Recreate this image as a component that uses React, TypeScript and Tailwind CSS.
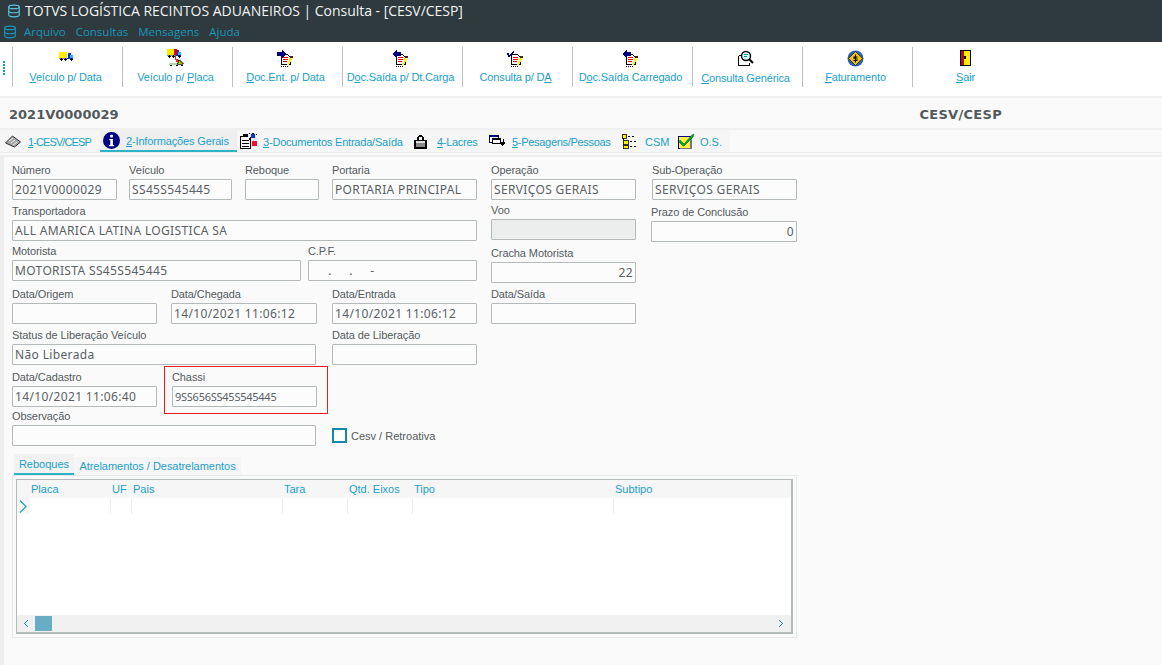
import React from "react";
import { Database } from "lucide-react";

const UI = "font-['Liberation_Sans',Arial,sans-serif]";

function Svg({ w = 20, h = 20, children }: { w?: number; h?: number; children: React.ReactNode }) {
  return (
    <svg width={w} height={h} viewBox={`0 0 ${w} ${h}`} shapeRendering="crispEdges" className="block">
      {children}
    </svg>
  );
}

function Truck() {
  return (
    <g>
      <rect x="0" y="0" width="8" height="6" fill="#ffee00" />
      <rect x="9" y="1" width="3" height="5" fill="#0033dd" />
      <rect x="11" y="3" width="3" height="3" fill="#33aaff" />
      <rect x="8" y="6" width="6" height="1" fill="#0033aa" />
      <rect x="0" y="6" width="8" height="1" fill="#888" />
      <path d="M2 6h1v1h1v1h-1v1h-1v-1h-1v-1h1zM6 6h1v1h1v1h-1v1h-1v-1h-1v-1h1zM12 6h1v1h1v1h-1v1h-1v-1h-1v-1h1z" fill="#000" />
    </g>
  );
}

function TruckIcon() {
  return (
    <Svg w={14} h={10}>
      <Truck />
    </Svg>
  );
}

function TruckPlaca() {
  return (
    <Svg w={18} h={20}>
      <Truck />
      <rect x="7" y="0" width="3" height="6" fill="#ee0000" />
      <path d="M8 6h1v4h2v1h1v1h-1v2h-1v-1h-1v-2h-1z" fill="#ee2233" />
      <rect x="2" y="14" width="13" height="2" fill="#b9d0b4" />
      <path d="M11 11h2l3 4h-6z" fill="#aacc00" />
      <path d="M11 11h2v1h1v1h1v1h1v1h-6v-1h1z" fill="none" stroke="#000" strokeWidth="0.6" />
      <path d="M3 16h2v1h-2zM9 16h2v1h-2zM14 16h2v1h-2z" fill="#000" />
    </Svg>
  );
}

function Paper() {
  return (
    <g>
      <path d="M4.5 4.5h6l3 3v7h-9z" fill="#fff" stroke="#000" strokeWidth="1" />
      <rect x="6" y="7" width="5" height="1" fill="#ee0000" />
      <rect x="6" y="9" width="5" height="1" fill="#ee0000" />
      <rect x="6" y="11" width="4" height="1" fill="#ee0000" />
      <path d="M12 8h2v1h1v1h-1v2h-1v2h-1v1h-2v-1h1v-2h1z" fill="#ffee00" />
      <rect x="13" y="6" width="3" height="2" fill="#552200" />
      <path d="M4 16h1v1h-1zM6 16h1v1h-1zM8 16h1v1h-1zM10 16h1v1h-1z" fill="#000" />
    </g>
  );
}

function DocArrow({ dir }: { dir: "in" | "out" }) {
  return (
    <Svg w={17} h={17}>
      <Paper />
      {dir === "in" ? (
        <path d="M0 2h5v-2h1l3 4-3 4h-1v-2h-5z" fill="#000080" />
      ) : (
        <path d="M9 2h-4v-2h-1l-4 4 4 4h1v-2h4z" fill="#000080" />
      )}
    </Svg>
  );
}

function DocCheck() {
  return (
    <Svg w={17} h={17}>
      <Paper />
      <path d="M0 3h2v2h1v-1h1v-1h1v-1h1v-1h1v2h-1v1h-1v1h-1v1h-1v1h-2v-2h-1z" fill="#000080" />
    </Svg>
  );
}

function Magnifier() {
  return (
    <Svg w={17} h={17}>
      <path d="M1.5 5.5h4M1.5 5.5v10h11v-3" fill="none" stroke="#000" strokeWidth="1" />
      <circle cx="9" cy="6" r="4.5" fill="#dff3f2" stroke="#000" strokeWidth="1.4" shapeRendering="auto" />
      <rect x="7" y="4" width="4" height="1" fill="#009999" />
      <rect x="7" y="6" width="3" height="1" fill="#009999" />
      <path d="M12 9l4 4" stroke="#000" strokeWidth="2" shapeRendering="auto" />
    </Svg>
  );
}

function Billing() {
  return (
    <svg width="17" height="17" viewBox="0 0 17 17" className="block">
      <circle cx="8.5" cy="8.5" r="8" fill="#2a5fc0" />
      <path d="M8.5 1.5l7 7-7 7-7-7z" fill="#f5c400" stroke="#000" strokeWidth="0.6" />
      <rect x="8" y="4.5" width="1" height="8" fill="#000" />
      <path d="M6.5 6.5h4v1h-3v1h3v2.5h-4v-1h3v-1h-3z" fill="#000" />
    </svg>
  );
}

function ExitDoor() {
  return (
    <Svg w={12} h={17}>
      <rect x="0" y="0" width="11" height="16" fill="#000" />
      <rect x="1" y="1" width="3" height="14" fill="#aa1122" />
      <rect x="4" y="1" width="6" height="14" fill="#ffee00" />
      <rect x="4" y="6" width="2" height="3" fill="#000" />
    </Svg>
  );
}

function PrinterIcon() {
  return (
    <svg width="16" height="13" viewBox="0 0 16 13" className="block">
      <path d="M0.5 8l7-7 8 6-6 5z" fill="#a7a7a7" stroke="#333" strokeWidth="1" />
      <path d="M4 6l4-3M6 8l4-3M8 10l4-3" stroke="#eee" strokeWidth="1" />
    </svg>
  );
}

function InfoIcon() {
  return (
    <svg width="17" height="17" viewBox="0 0 17 17" className="block">
      <circle cx="8.5" cy="8.5" r="8.5" fill="#000080" />
      <rect x="7.2" y="2.8" width="2.7" height="2.6" fill="#fff" />
      <path d="M6.3 7h3.6v6h1v1.2h-4.6v-1.2h1v-4.8h-1z" fill="#fff" />
    </svg>
  );
}

function DocsIcon() {
  return (
    <Svg w={17} h={16}>
      <rect x="0.5" y="3.5" width="10" height="12" fill="#fff" stroke="#000" />
      <rect x="3" y="1" width="5" height="3" fill="#000" />
      <path d="M2 7h7v1h-7zM2 10h7v1h-7zM2 13h7v1h-7z" fill="#000" />
      <path d="M8 0h8v5h1v8h-1v1h-5v-10h-3z" fill="#e8e8e8" />
      <path d="M9 0h1v1h-1zM12 0h2v1h-2zM16 1h1v1h-1zM16 11h1v2h-1z" fill="#000" />
      <rect x="11" y="1" width="4" height="4" fill="#1133cc" />
      <rect x="12" y="8" width="5" height="5" fill="#ee1133" />
      <rect x="9" y="5" width="2" height="2" fill="#000" />
    </Svg>
  );
}

function LockIcon() {
  return (
    <Svg w={13} h={15}>
      <path d="M3 6v-3h1v-1h1v-1h3v1h1v1h1v3h-2v-3h-3v3z" fill="#000" />
      <rect x="0" y="6" width="13" height="9" fill="#000" />
      <rect x="2" y="7" width="9" height="2" fill="#ddd" />
      <rect x="2" y="9" width="9" height="4" fill="#8a8a8a" />
    </Svg>
  );
}

function WindowsIcon() {
  return (
    <Svg w={16} h={12}>
      <rect x="0" y="0" width="10" height="8" fill="#000080" />
      <rect x="1" y="2" width="8" height="5" fill="#fff" />
      <rect x="3" y="3" width="9" height="6" fill="#000" />
      <rect x="4" y="5" width="7" height="3" fill="#fff" />
      <path d="M14 4h1v3h1v2h-1v1h-1v1h-1v-1h-1v-1h-1v-2h3z" fill="#000" />
    </Svg>
  );
}

function TreeIcon() {
  return (
    <Svg w={15} h={15}>
      <rect x="1" y="2" width="1" height="13" fill="#000" />
      <rect x="0" y="0" width="4" height="4" fill="#ffee00" stroke="#000" strokeWidth="0.8" />
      <rect x="1" y="6" width="5" height="4" fill="#ffee00" stroke="#000" strokeWidth="0.8" />
      <rect x="1" y="11" width="5" height="3" fill="#ffee00" stroke="#000" strokeWidth="0.8" />
      <path d="M6 2h2v1h-2zM10 2h2v1h-2zM8 7h2v1h-2zM12 7h2v1h-2zM8 12h2v1h-2zM12 12h2v1h-2z" fill="#000" />
    </Svg>
  );
}

function CheckIcon() {
  return (
    <Svg w={17} h={16}>
      <rect x="1" y="3" width="12" height="12" fill="#ffee44" stroke="#000080" strokeWidth="1" />
      <rect x="3" y="15" width="12" height="1" fill="#777" />
      <rect x="13" y="5" width="2" height="10" fill="#777" />
      <path d="M3 7l3 3 1 1 8-9 2-1-1 3-9 9-1 0-4-4z" fill="#00aa22" stroke="#005511" strokeWidth="0.5" shapeRendering="auto" />
    </Svg>
  );
}

const tools: { w: string; top: string; icon: React.ReactNode; label: React.ReactNode; low?: boolean }[] = [
  { w: "w-[110px]", top: "pt-[5px]", icon: <TruckIcon />, label: <><u>V</u>eículo p/ Data</> },
  { w: "w-[110px]", top: "pt-[2px]", icon: <TruckPlaca />, label: <>Veículo p/ <u>P</u>laca</> },
  { w: "w-[110px]", top: "pt-[3px]", icon: <DocArrow dir="in" />, label: <><u>D</u>oc.Ent. p/ Data</> },
  { w: "w-[120px]", top: "pt-[3px]", icon: <DocArrow dir="out" />, label: <>D<u>o</u>c.Saída p/ Dt.Carga</> },
  { w: "w-[110px]", top: "pt-[3px]", icon: <DocCheck />, label: <>Consulta p/ D<u>A</u></> },
  { w: "w-[120px]", top: "pt-[3px]", icon: <DocArrow dir="out" />, label: <>D<u>o</u>c.Saída Carregado</> },
  { w: "w-[110px]", top: "pt-[3px]", icon: <Magnifier />, label: <><u>C</u>onsulta Genérica</>, low: true },
  { w: "w-[110px]", top: "pt-[3px]", icon: <Billing />, label: <><u>F</u>aturamento</> },
  { w: "w-[110px]", top: "pt-[3px]", icon: <ExitDoor />, label: <><u>S</u>air</> },
];

function Toolbar() {
  return (
    <div className="flex h-[56px] shrink-0 items-start border-b-2 border-[#f0f0f0] bg-white pt-[5px]">
      <div className="flex h-[40px] w-[12px] shrink-0 items-center">
        <div className="ml-[3px] mt-[2px] h-[15px] w-[2px] bg-[repeating-linear-gradient(to_bottom,#1a9bc4_0,#1a9bc4_2px,transparent_2px,transparent_3px)]" />
      </div>
      {tools.map((t, i) => (
        <div key={i} className={`flex h-[40px] shrink-0 flex-col items-center border-l border-[#b9c1c1] pr-[4px] ${t.w} ${t.top}`}>
          <div className="flex h-[20px] items-start justify-center">{t.icon}</div>
          <div className={`mt-auto whitespace-nowrap text-[11px] leading-[14px] tracking-[-0.15px] text-[#1c9fc9] ${UI} ${t.low ? "pb-[2px]" : "pb-[3px]"}`}>{t.label}</div>
        </div>
      ))}
    </div>
  );
}

const tabs: { cls: string; text?: string; icon: React.ReactNode; label: React.ReactNode; active?: boolean }[] = [
  { cls: "w-[100px] pl-[5px]", text: "tracking-[-0.9px]", icon: <PrinterIcon />, label: <><u>1</u>-CESV/CESP</> },
  { cls: "w-[137px] pl-[3px]", text: "tracking-[-0.15px]", icon: <InfoIcon />, label: <><u>2</u>-Informações Gerais</>, active: true },
  { cls: "w-[173px] pl-[3px]", text: "tracking-[-0.2px]", icon: <DocsIcon />, label: <><u>3</u>-Documentos Entrada/Saída</> },
  { cls: "w-[74px] pl-[4px]", text: "tracking-[-0.3px]", icon: <LockIcon />, label: <><u>4</u>-Lacres</> },
  { cls: "w-[132px] pl-[5px]", text: "tracking-[-0.3px]", icon: <WindowsIcon />, label: <><u>5</u>-Pesagens/Pessoas</> },
  { cls: "w-[55px] pl-[6px]", icon: <TreeIcon />, label: <>CSM</> },
  { cls: "w-[59px] pl-[6px]", icon: <CheckIcon />, label: <>O.S.</> },
];

function Tabs() {
  return (
    <div className="flex h-[23px] shrink-0 border-b border-[#ececec] bg-[#fafafa]">
      {tabs.map((t, i) => (
        <div
          key={i}
          className={`flex shrink-0 items-center ${t.cls} ${t.active ? "border-b-2 border-[#2bb3c6] bg-[#efefef]" : "bg-[#f6f6f6]"}`}
        >
          <div className="w-[23px] shrink-0">{t.icon}</div>
          <span className={`whitespace-nowrap pt-[2px] text-[11px] leading-[14px] text-[#1c9fc9] ${UI} ${t.text ?? ""}`}>{t.label}</span>
        </div>
      ))}
    </div>
  );
}

function Field({
  label,
  value = "",
  w,
  right = false,
  disabled = false,
  small = false,
}: {
  label: string;
  value?: string;
  w: string;
  right?: boolean;
  disabled?: boolean;
  small?: boolean;
}) {
  return (
    <div className={`shrink-0 ${w}`}>
      <div className={`h-[16px] whitespace-nowrap text-[11px] leading-[14px] tracking-[-0.1px] text-[#555b5e] ${UI}`}>{label}</div>
      <div
        className={`flex h-[21px] items-center whitespace-pre rounded-[1px] border border-[#b4baba] px-[2px] leading-none text-[#5a6064] font-['Noto_Sans',sans-serif] ${
          disabled ? "bg-[#eceeee]" : "bg-[#fcfcfc]"
        } ${right ? "justify-end" : ""} ${small ? "text-[11px] tracking-[-0.25px]" : "text-[12px] tracking-[0.35px]"}`}
      >
        {value}
      </div>
    </div>
  );
}

function Form() {
  return (
    <div className="flex pl-[8px] pt-[6px]">
      <div className="flex w-[465px] shrink-0 flex-col">
        <div className="flex">
          <Field label="Número" value="2021V0000029" w="w-[105px]" />
          <Field label="Veículo" value="SS45S545445" w="w-[103px] ml-[12px]" />
          <Field label="Reboque" w="w-[74px] ml-[13px]" />
          <Field label="Portaria" value="PORTARIA PRINCIPAL" w="w-[145px] ml-[13px]" />
        </div>
        <div className="mt-[4px] flex">
          <Field label="Transportadora" value="ALL AMARICA LATINA LOGISTICA SA" w="w-[465px]" />
        </div>
        <div className="mt-[3px] flex">
          <Field label="Motorista" value="MOTORISTA SS45S545445" w="w-[289px]" />
          <Field label="C.P.F." value="     .     .     -" w="w-[169px] ml-[7px]" />
        </div>
        <div className="mt-[6px] flex">
          <Field label="Data/Origem" w="w-[145px]" />
          <Field label="Data/Chegada" value="14/10/2021 11:06:12" w="w-[146px] ml-[14px]" />
          <Field label="Data/Entrada" value="14/10/2021 11:06:12" w="w-[145px] ml-[15px]" />
        </div>
        <div className="mt-[4px] flex">
          <Field label="Status de Liberação Veículo" value="Não Liberada" w="w-[304px]" />
          <Field label="Data de Liberação" w="w-[145px] ml-[16px]" />
        </div>
        <div className="mt-[5px] flex">
          <Field label="Data/Cadastro" value="14/10/2021 11:06:40" w="w-[145px]" />
          <div className="relative ml-[15px]">
            <Field label="Chassi" value="9SS656SS45S545445" small w="w-[145px]" />
            <div className="absolute -bottom-[7px] -left-[8px] -right-[11px] -top-[4px] border border-[#ee1c25]" />
          </div>
        </div>
        <div className="mt-[2px] flex items-end">
          <Field label="Observação" w="w-[304px]" />
          <div className="mb-[3px] ml-[16px] flex items-center gap-[4px]">
            <div className="h-[15px] w-[15px] border-2 border-[#1489ad] bg-white" />
            <span className={`text-[11px] leading-[14px] text-[#555b5e] ${UI}`}>Cesv / Retroativa</span>
          </div>
        </div>
      </div>
      <div className="ml-[14px] flex w-[145px] shrink-0 flex-col">
        <Field label="Operação" value="SERVIÇOS GERAIS" w="w-[145px]" />
        <div className="mt-[3px]">
          <Field label="Voo" disabled w="w-[145px]" />
        </div>
        <div className="mt-[6px]">
          <Field label="Cracha Motorista" value="22" right w="w-[145px]" />
        </div>
        <div className="mt-[4px]">
          <Field label="Data/Saída" w="w-[145px]" />
        </div>
      </div>
      <div className="ml-[15px] flex w-[146px] shrink-0 flex-col">
        <Field label="Sub-Operação" value="SERVIÇOS GERAIS" w="w-[145px] ml-[1px]" />
        <div className="mt-[5px]">
          <Field label="Prazo de Conclusão" value="0" right w="w-[146px]" />
        </div>
      </div>
    </div>
  );
}

const cols = ["Placa", "UF", "Pais", "Tara", "Qtd. Eixos", "Tipo", "Subtipo"];
const gridCols = "grid grid-cols-[13px_81px_21px_151px_65px_65px_201px_1fr]";

function Grid() {
  return (
    <div className={`ml-[8px] mt-[8px] w-[785px] ${UI}`}>
      <div className="flex h-[21px] items-end pl-[2px]">
        <div className="flex h-[21px] w-[60px] items-center justify-center border-b-2 border-[#2bb3c6] bg-[#f2f2f2] pt-[1px] text-[11px] text-[#1c9fc9]">
          Reboques
        </div>
        <div className="flex h-[18px] w-[167px] items-center justify-center bg-[#f5f5f5] text-[11px] tracking-[-0.03px] text-[#1c9fc9]">
          Atrelamentos / Desatrelamentos
        </div>
      </div>
      <div className="h-[163px] border border-[#e6e8e8] p-[3px]">
        <div className="flex h-full flex-col border border-b-2 border-r-2 border-[#b4baba] bg-white">
          <div className={`${gridCols} h-[18px] bg-[#f6f6f6] text-[11px] leading-[18px] text-[#1c9fc9]`}>
            <div />
            {cols.map((c) => (
              <div key={c} className="whitespace-nowrap pl-[1px]">
                {c}
              </div>
            ))}
          </div>
          <div className={`${gridCols} h-[16px]`}>
            <div className="flex items-center bg-[#f6f6f6] pl-[2px]">
              <svg width="8" height="13" viewBox="0 0 8 13" className="block">
                <path d="M1 0.5l6 6-6 6" fill="none" stroke="#1c9fc9" strokeWidth="1.2" />
              </svg>
            </div>
            <div className="border-r border-[#ececec]" />
            <div className="border-r border-[#ececec]" />
            <div className="border-r border-[#ececec]" />
            <div className="border-r border-[#ececec]" />
            <div className="border-r border-[#ececec]" />
            <div className="border-r border-[#ececec]" />
            <div />
          </div>
          <div className="flex-1" />
          <div className="flex h-[17px] items-center bg-[#f0f0f0]">
            <svg width="18" height="7" viewBox="0 0 18 7" className="block shrink-0" shapeRendering="crispEdges">
              <path d="M10 0h1v1h-1zM9 1h1v1h-1zM8 2h1v1h-1zM7 3h1v1h-1zM8 4h1v1h-1zM9 5h1v1h-1zM10 6h1v1h-1z" fill="#1489ad" />
            </svg>
            <div className="h-[15px] w-[17px] shrink-0 bg-[#68adc3]" />
            <div className="flex-1" />
            <svg width="14" height="7" viewBox="0 0 14 7" className="block shrink-0" shapeRendering="crispEdges">
              <path d="M2 0h1v1h-1zM3 1h1v1h-1zM4 2h1v1h-1zM5 3h1v1h-1zM4 4h1v1h-1zM3 5h1v1h-1zM2 6h1v1h-1z" fill="#1489ad" />
            </svg>
          </div>
        </div>
      </div>
    </div>
  );
}

export default function App() {
  return (
    <div className={`flex h-[665px] w-[1162px] flex-col overflow-hidden bg-[#fafafa] ${UI}`}>
      <div className="h-[42px] shrink-0 bg-[#2e3a3e]">
        <div className="flex h-[21px] items-center pl-[7px]">
          <Database size={14} strokeWidth={2} className="text-[#5bc0de]" />
          <span className="ml-[4px] whitespace-nowrap text-[14px] font-medium leading-[21px] tracking-[-0.03px] text-[#f2f2f2] font-['Open_Sans',sans-serif]">
            TOTVS LOGÍSTICA RECINTOS ADUANEIROS | Consulta - [CESV/CESP]
          </span>
        </div>
        <div className="flex h-[21px] items-center gap-[10px] pl-[3px] text-[11.5px] text-[#1a94b8] font-['Open_Sans',sans-serif]">
          <Database size={14} strokeWidth={2} className="-mr-[3px] text-[#1a94b8]" />
          <span>Arquivo</span>
          <span>Consultas</span>
          <span>Mensagens</span>
          <span>Ajuda</span>
        </div>
      </div>
      <Toolbar />
      <div className="flex h-[32px] shrink-0 items-center justify-between border-b-2 border-[#f0f0f0] pl-[9px] pr-[160px] pt-[3px] font-['DejaVu_Sans',sans-serif] text-[13px] font-bold text-[#53595c]">
        <span>2021V0000029</span>
        <span className="tracking-[0.3px]">CESV/CESP</span>
      </div>
      <Tabs />
      <div className="mt-[2px] flex-1 border-l-[4px] border-t-2 border-[#efefef]">
        <Form />
        <Grid />
      </div>
    </div>
  );
}
